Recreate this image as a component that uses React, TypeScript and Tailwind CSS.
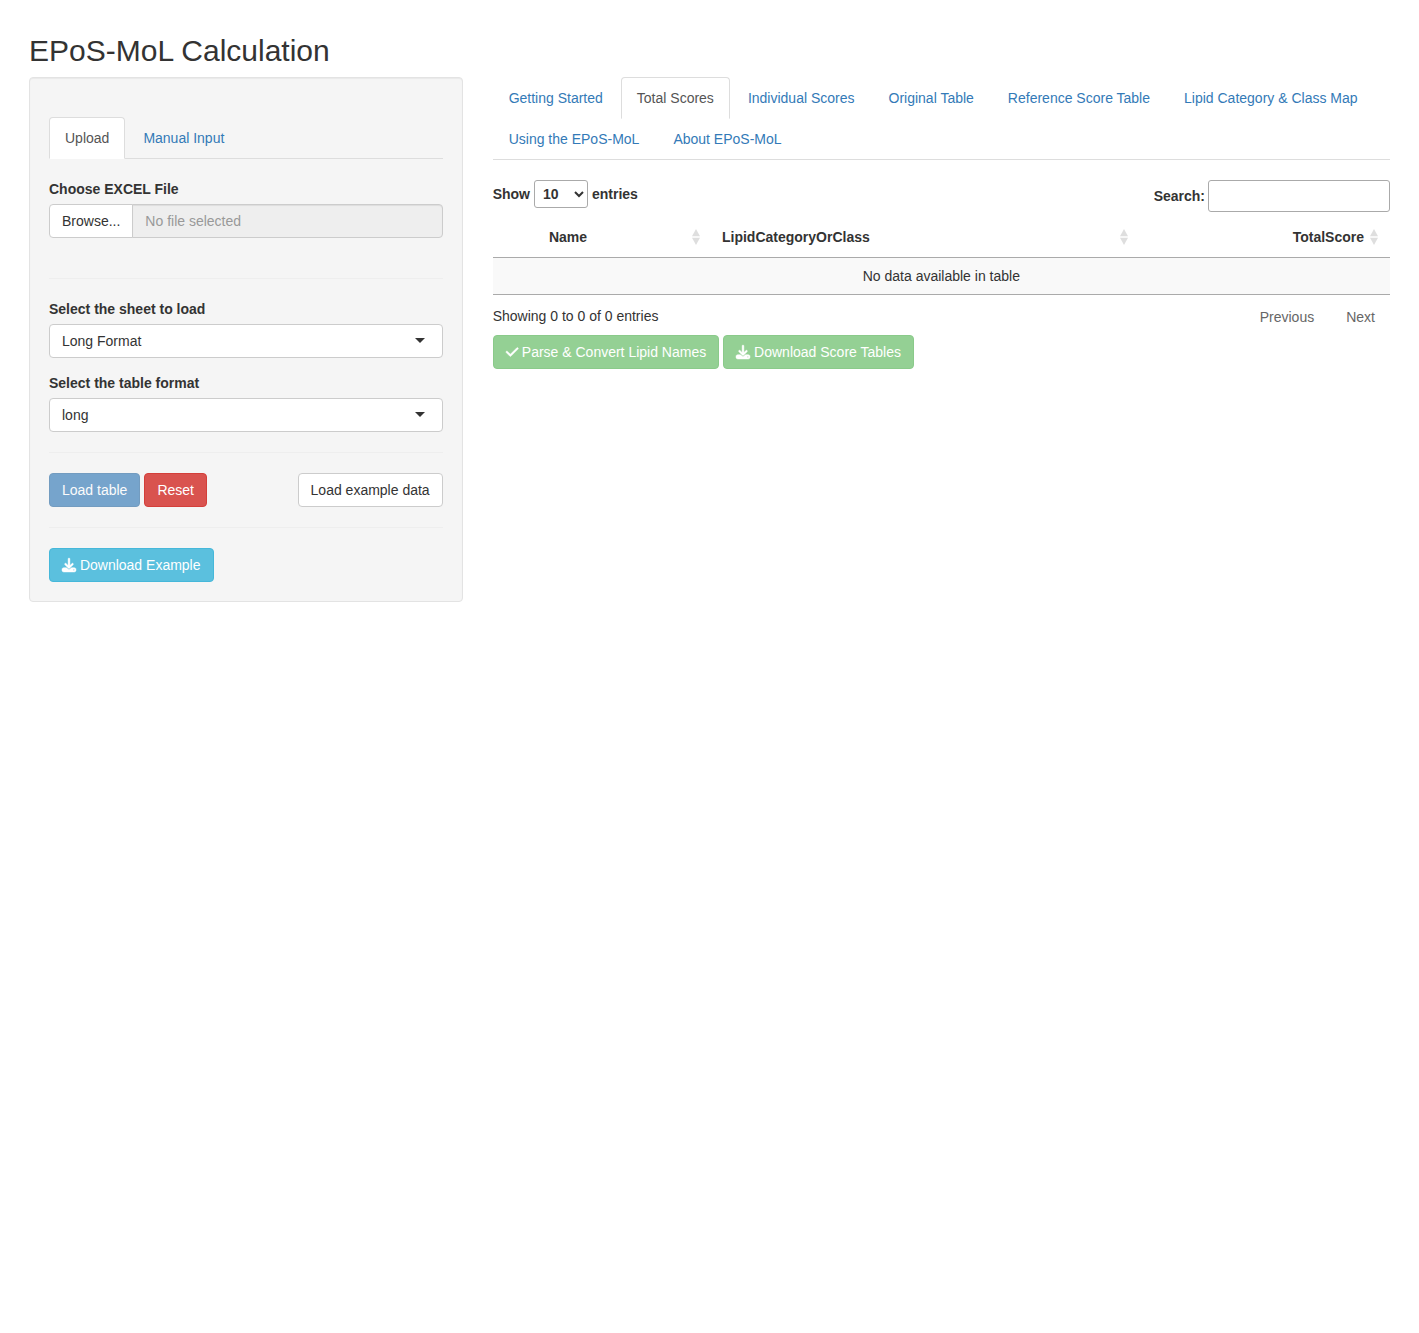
import React from "react";
import { FaCheck, FaDownload } from "react-icons/fa6";

function Tab({ children, active }: { children: React.ReactNode; active?: boolean }) {
  return (
    <a
      className={
        "mr-[2px] -mb-px block rounded-t border px-[15px] py-[10px] " +
        (active ? "border-[#ddd] border-b-transparent bg-white text-[#555]" : "border-transparent text-[#337ab7]")
      }
    >
      {children}
    </a>
  );
}

function Button({ children, className }: { children: React.ReactNode; className: string }) {
  return (
    <button className={"flex h-[34px] items-center whitespace-pre rounded border px-3 " + className}>{children}</button>
  );
}

function Divider() {
  return <hr className="my-5 border-t border-[#eee]" />;
}

function SelectBox({ label, value }: { label: string; value: string }) {
  return (
    <div className="mb-[15px]">
      <div className="mb-[5px] font-bold">{label}</div>
      <div className="flex h-[34px] items-center justify-between rounded border border-[#ccc] bg-white pr-[17px] pl-3">
        <span>{value}</span>
        <span className="-mt-[2px] border-x-[5px] border-t-[5px] border-x-transparent border-t-[#333]" />
      </div>
    </div>
  );
}

function SortIcon() {
  return (
    <svg width="8" height="16" viewBox="0 0 8 16" fill="#dedede">
      <path d="M4 0L8 7.3H0Z" />
      <path d="M4 16L8 8.7H0Z" />
    </svg>
  );
}

function Sidebar() {
  return (
    <aside className="h-[525px] w-[433.67px] shrink-0 rounded border border-[#e3e3e3] bg-[#f5f5f5] px-[19px] pt-[39px] shadow-[inset_0_1px_1px_rgba(0,0,0,0.05)]">
      <nav className="flex border-b border-[#ddd]">
        <Tab active>Upload</Tab>
        <Tab>Manual Input</Tab>
      </nav>
      <div className="mt-5 mb-[5px] font-bold">Choose EXCEL File</div>
      <div className="flex h-[34px]">
        <button className="rounded-l border border-[#ccc] bg-white px-3 text-[#333]">Browse...</button>
        <div className="-ml-px flex flex-1 items-center rounded-r border border-[#ccc] bg-[#eee] px-3 text-[#999] shadow-[inset_0_1px_1px_rgba(0,0,0,0.075)]">
          No file selected
        </div>
      </div>
      <div className="h-5" />
      <Divider />
      <SelectBox label="Select the sheet to load" value="Long Format" />
      <SelectBox label="Select the table format" value="long" />
      <Divider />
      <div className="flex gap-1">
        <Button className="border-[#2e6da4] bg-[#337ab7] text-white opacity-65">Load table</Button>
        <Button className="border-[#d43f3a] bg-[#d9534f] text-white">Reset</Button>
        <Button className="ml-auto border-[#ccc] bg-white">Load example data</Button>
      </div>
      <Divider />
      <Button className="border-[#46b8da] bg-[#5bc0de] text-white">
        <FaDownload size={14} className="overflow-visible stroke-current stroke-[16]" /> Download Example
      </Button>
    </aside>
  );
}

function ScoresPanel() {
  return (
    <main className="w-[897.33px]">
      <nav className="flex flex-wrap border-b border-[#ddd]">
        <Tab>Getting Started</Tab>
        <Tab active>Total Scores</Tab>
        <Tab>Individual Scores</Tab>
        <Tab>Original Table</Tab>
        <Tab>Reference Score Table</Tab>
        <Tab>Lipid Category &amp; Class Map</Tab>
        <Tab>Using the EPoS-MoL</Tab>
        <Tab>About EPoS-MoL</Tab>
      </nav>
      <div className="mt-5 flex items-start justify-between font-bold">
        <label className="flex h-7 items-center gap-1">
          Show
          <select className="h-7 w-[54px] rounded-[3px] border border-[#aaa] p-1" defaultValue="10">
            <option>10</option>
            <option>25</option>
            <option>50</option>
            <option>100</option>
          </select>
          entries
        </label>
        <label className="flex items-center gap-[3px]">
          Search:
          <input className="h-8 w-[182px] rounded-[3px] border border-[#aaa] p-[5px]" />
        </label>
      </div>
      <div className="mt-[5px] grid h-[41px] grid-cols-[219.33px_428px_250px] border-b border-[#aaa] font-bold">
        <div className="flex items-center justify-between pr-[11.5px] pl-[56.3px]">
          Name
          <SortIcon />
        </div>
        <div className="flex items-center justify-between pr-[11.5px] pl-[10px]">
          LipidCategoryOrClass
          <SortIcon />
        </div>
        <div className="flex items-center justify-end gap-[6.5px] pr-[11.5px]">
          TotalScore
          <SortIcon />
        </div>
      </div>
      <div className="h-[37px] border-b border-[#aaa] bg-[#f9f9f9] pt-2 text-center">No data available in table</div>
      <div className="flex h-10 justify-between pt-[11px]">
        <span>Showing 0 to 0 of 0 entries</span>
        <div className="flex gap-8 pt-px pr-[15px] text-[#666]">
          <span>Previous</span>
          <span>Next</span>
        </div>
      </div>
      <div className="flex gap-1">
        <Button className="border-[#4cae4c] bg-[#5cb85c] text-white opacity-65">
          <FaCheck className="h-[14px] w-[12.25px] overflow-visible stroke-current stroke-[20]" /> Parse &amp; Convert Lipid Names
        </Button>
        <Button className="border-[#4cae4c] bg-[#5cb85c] text-white opacity-65">
          <FaDownload size={14} className="overflow-visible stroke-current stroke-[16]" /> Download Score Tables
        </Button>
      </div>
    </main>
  );
}

export default function App() {
  return (
    <div className="min-h-[1333px] bg-white px-[29px] pt-[34px] font-['Helvetica_Neue',Helvetica,'Liberation_Sans',sans-serif] text-[14px] leading-5 text-[#333]">
      <h1 className="mb-[10px] text-[30px] leading-[33px]">EPoS-MoL Calculation</h1>
      <div className="flex items-start gap-[30px]">
        <Sidebar />
        <ScoresPanel />
      </div>
    </div>
  );
}
